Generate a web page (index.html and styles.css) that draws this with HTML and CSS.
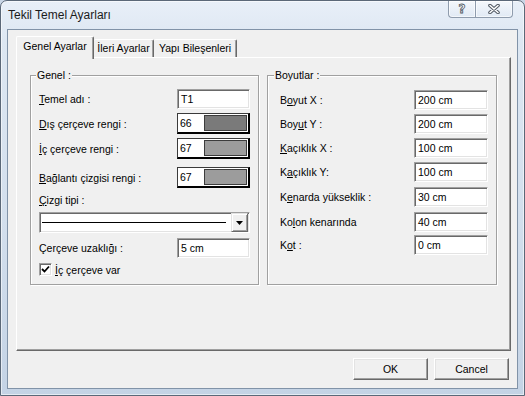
FILE: index.html
```html
<!DOCTYPE html>
<html lang="tr">
<head>
<meta charset="utf-8">
<title>Tekil Temel Ayarları</title>
<link rel="stylesheet" href="styles.css">
</head>
<body>
<div class="window">
  <div class="titlebar">
    <span class="title">Tekil Temel Ayarları</span>
    <div class="caption">
      <div class="cbtn help"><span class="qmark">?</span></div>
      <div class="cbtn close">
        <svg width="12" height="10" viewBox="0 0 12 10">
          <path d="M2 1.5 L10 8.5 M10 1.5 L2 8.5" stroke="#505862" stroke-width="3.6" stroke-linecap="round" fill="none"/>
          <path d="M2 1.5 L10 8.5 M10 1.5 L2 8.5" stroke="#ffffff" stroke-width="1.6" stroke-linecap="round" fill="none"/>
        </svg>
      </div>
    </div>
  </div>
  <div class="client">
    <div class="tabs">
      <div class="tab active">Genel Ayarlar</div>
      <div class="tab t2">İleri Ayarlar</div>
      <div class="tab t3">Yapı Bileşenleri</div>
    </div>
    <div class="panel">
      <fieldset class="group gleft">
        <legend>Genel :</legend>
        <div class="row"><span><u>T</u>emel adı :</span><div class="field">T1</div></div>
        <div class="row mt4"><span><u>D</u>ış çerçeve rengi :</span><div class="colorbox"><span class="num">66</span><span class="swatch c66"></span></div></div>
        <div class="row mt4"><span><u>İ</u>ç çerçeve rengi :</span><div class="colorbox"><span class="num">67</span><span class="swatch c67"></span></div></div>
        <div class="row mt8"><span><u>B</u>ağlantı çizgisi rengi :</span><div class="colorbox"><span class="num">67</span><span class="swatch c67"></span></div></div>
        <div class="caption-label"><u>Ç</u>izgi tipi :</div>
        <div class="combo">
          <span class="linesample"></span>
          <span class="dropbtn"><svg width="7" height="4" viewBox="0 0 7 4"><path d="M0 0 H7 L3.5 4 Z" fill="#000"/></svg></span>
        </div>
        <div class="row mt5 h20"><span>Çerçeve uzaklığı :</span><div class="field">5 cm</div></div>
        <div class="check-row">
          <span class="checkbox"><svg width="9" height="9" viewBox="0 0 9 9"><path d="M1 4 L3.5 6.5 L8 1.5" stroke="#000" stroke-width="1.8" fill="none"/></svg></span>
          <span><u>İ</u>ç çerçeve var</span>
        </div>
      </fieldset>
      <fieldset class="group gright">
        <legend>Boyutlar :</legend>
        <div class="row h20"><span>B<u>o</u>yut X :</span><div class="field">200 cm</div></div>
        <div class="row h20 mt4"><span>Boy<u>u</u>t Y :</span><div class="field">200 cm</div></div>
        <div class="row h20 mt4"><span><u>K</u>açıklık X :</span><div class="field">100 cm</div></div>
        <div class="row h20 mt4"><span>K<u>a</u>çıklık Y:</span><div class="field">100 cm</div></div>
        <div class="row h20 mt5"><span>K<u>e</u>narda yükseklik :</span><div class="field">30 cm</div></div>
        <div class="row h20 mt5"><span>Ko<u>l</u>on kenarında</span><div class="field">40 cm</div></div>
        <div class="row h20 mt3"><span>K<u>o</u>t :</span><div class="field">0 cm</div></div>
      </fieldset>
    </div>
    <div class="buttons">
      <button class="btn">OK</button>
      <button class="btn">Cancel</button>
    </div>
  </div>
</div>
</body>
</html>
```
FILE: styles.css
```css
* { box-sizing: border-box; }

html, body {
  margin: 0;
  width: 525px;
  height: 396px;
  overflow: hidden;
}

body {
  font-family: "Liberation Sans", Arial, sans-serif;
  font-size: 10.5px;
  color: #000;
  background: #c9d6e6;
}

.window {
  width: 525px;
  height: 396px;
  display: flex;
  flex-direction: column;
  border: 1px solid #5b6878;
  border-radius: 7px 7px 0 0;
  background: linear-gradient(180deg, #e8eff8 0%, #dde7f2 10%, #d3dfed 55%, #c4d3e5 100%);
  box-shadow: inset 0 0 0 1px rgba(255, 255, 255, 0.55);
}

.titlebar {
  height: 28px;
  display: flex;
  align-items: flex-start;
}

.title {
  font-size: 12px;
  line-height: 28px;
  padding-left: 7px;
  color: #1b1b1b;
}

.caption {
  margin-left: auto;
  margin-right: 11px;
  display: flex;
}

.cbtn {
  height: 17px;
  display: flex;
  align-items: center;
  justify-content: center;
  border: 1px solid #8f9cad;
  border-top: none;
  background: linear-gradient(180deg, rgba(255,255,255,0.55), rgba(220,230,242,0.4));
  box-shadow: inset 0 0 0 1px rgba(255,255,255,0.6);
}

.help {
  width: 27px;
  border-radius: 0 0 0 4px;
  border-right: none;
}

.close {
  width: 38px;
  border-radius: 0 0 4px 0;
}

.qmark {
  font-family: "DejaVu Sans", sans-serif;
  font-weight: bold;
  font-size: 12px;
  line-height: 12px;
  color: #ffffff;
  -webkit-text-stroke: 0.8px #505862;
}

.client {
  flex: 1;
  margin: 0 6px 6px 6px;
  border: 1px solid #8193a8;
  background: #f0f0f0;
  display: flex;
  flex-direction: column;
  padding: 6px 6px 8px 8px;
}

.tabs {
  height: 21px;
  display: flex;
  align-items: flex-end;
  position: relative;
  z-index: 1;
}

.tab {
  height: 18px;
  line-height: 16px;
  text-align: center;
  white-space: nowrap;
  background: #f0f0f0;
  border-top: 1px solid #fff;
  border-left: 1px solid #fff;
  border-right: 1px solid #696969;
  box-shadow: inset -1px 0 0 #a0a0a0;
  border-radius: 2px 2px 0 0;
}

.tab.active {
  width: 78px;
  height: 23px;
  line-height: 18px;
  margin-bottom: -2px;
}

.tab.t2 { width: 60px; border-left: none; }
.tab.t3 { width: 83px; border-left: none; }

.panel {
  flex: 1;
  border: 1px solid;
  border-color: #fff #696969 #696969 #fff;
  box-shadow: inset -1px -1px 0 #a0a0a0;
  display: grid;
  grid-template-columns: 229px 230px;
  column-gap: 8px;
  align-items: stretch;
  align-content: start;
  padding: 11px 0 0 13px;
}

.group {
  margin: 0;
  min-width: 0;
  border: 1px solid #a0a0a0;
  box-shadow: 1px 1px 0 #fff, inset 1px 1px 0 #fff;
  display: flex;
  flex-direction: column;
}

.gleft { padding: 7px 8px 8px 8px; }
.gright { padding: 8px 8px 8px 12px; }

legend {
  line-height: 13px;
  padding: 0 1px;
  background: #f0f0f0;
}

.gleft legend { margin-left: -3px; }
.gright legend { margin-left: -6px; }

.row {
  display: flex;
  align-items: center;
  justify-content: space-between;
  height: 20px;
  white-space: nowrap;
}

.row.mt4 { margin-top: 4px; }
.row.mt5 { margin-top: 5px; }
.row.mt3 { margin-top: 3px; }
.row.mt8 { margin-top: 8px; }
.gleft .row.mt4, .gleft .row.mt8 { height: 21px; }
.row.h20 { height: 20px; }

.field {
  width: 73px;
  height: 20px;
  background: #fff;
  border: 1px solid;
  border-color: #a0a0a0 #fff #fff #a0a0a0;
  box-shadow: inset 1px 1px 0 #696969, inset -1px -1px 0 #e3e3e3;
  padding-left: 3px;
  line-height: 18px;
}

.gright .field { width: 74px; }

.colorbox {
  width: 73px;
  height: 21px;
  display: flex;
  background: #fff;
  border-style: solid;
  border-width: 1px 2px 2px 1px;
  border-color: #3a3a3a #000 #000 #3a3a3a;
}

.num {
  width: 26px;
  padding-left: 2px;
  line-height: 18px;
}

.swatch {
  flex: 1;
  margin: 1px 1px 1px 0;
  border: 1px solid #3c3c3c;
}

.c66 { background: #7a7a7a; }
.c67 { background: #9c9c9c; }

.caption-label {
  margin-top: 6px;
  height: 13px;
  line-height: 13px;
}

.combo {
  margin-top: 5px;
  height: 21px;
  display: flex;
  align-items: center;
  background: #fff;
  border: 1px solid;
  border-color: #a0a0a0 #fff #fff #a0a0a0;
  box-shadow: inset 1px 1px 0 #696969, inset -1px -1px 0 #e3e3e3;
  padding: 1px 1px 1px 2px;
}

.linesample {
  flex: 1;
  height: 1px;
  background: #000;
  margin-right: 5px;
}

.dropbtn {
  width: 17px;
  height: 19px;
  display: flex;
  align-items: center;
  justify-content: center;
  background: #f0f0f0;
  border: 1px solid;
  border-color: #e3e3e3 #696969 #696969 #e3e3e3;
  box-shadow: inset 1px 1px 0 #fff, inset -1px -1px 0 #a0a0a0;
}

.check-row {
  margin-top: 5px;
  height: 13px;
  display: flex;
  align-items: center;
  gap: 3px;
  white-space: nowrap;
}

.checkbox {
  width: 13px;
  height: 13px;
  display: flex;
  align-items: center;
  justify-content: center;
  background: #fff;
  border: 1px solid;
  border-color: #a0a0a0 #fff #fff #a0a0a0;
  box-shadow: inset 1px 1px 0 #696969, inset -1px -1px 0 #e3e3e3;
}

.buttons {
  display: flex;
  justify-content: flex-end;
  gap: 6px;
  margin-top: 7px;
  margin-right: 2px;
}

.btn {
  width: 75px;
  height: 22px;
  padding: 0;
  font: inherit;
  color: #000;
  background: #f0f0f0;
  border: 1px solid;
  border-color: #fff #696969 #696969 #fff;
  box-shadow: inset -1px -1px 0 #a0a0a0, inset 1px 1px 0 #e3e3e3;
  border-radius: 0;
}
```
